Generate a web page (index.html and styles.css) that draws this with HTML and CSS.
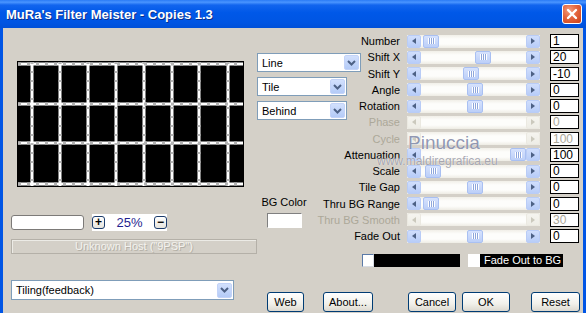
FILE: index.html
```html
<!DOCTYPE html>
<html lang="en">
<head>
  <meta charset="UTF-8" />
  <title>MuRa's Filter Meister - Copies 1.3</title>
  <link rel="stylesheet" href="styles.css">
</head>
<body>

<div class="window">
  <div class="titlebar">
    <span class="title">MuRa's Filter Meister - Copies 1.3</span>
    <span class="close">
      <svg width="12" height="12" viewBox="0 0 12 12"><path d="M2 2 L10 10 M10 2 L2 10" stroke="#fff" stroke-width="2.4" stroke-linecap="round"/></svg>
    </span>
  </div>

  <div class="frame">
    <!-- Preview side -->
    <div class="left">
      <div class="preview">
        <svg width="227" height="126" viewBox="0 0 227 126">
          <rect width="227" height="126" fill="#000"/>
          <g stroke="#fff" stroke-width="3">
            <path d="M1 3 H226 M1 43 H226 M1 82 H226 M1 123 H226"/>
            <path d="M15 1 V125 M43 1 V125 M71 1 V125 M99 1 V125 M127 1 V125 M155 1 V125 M182 1 V125 M211 1 V125"/>
          </g>
          <g stroke="#b4b4b4" stroke-width="3" stroke-dasharray="3 6">
            <path d="M1 3 H226 M1 43 H226 M1 82 H226 M1 123 H226"/>
          </g>
          <g stroke="#b4b4b4" stroke-width="3" stroke-dasharray="2 7">
            <path d="M15 1 V125 M43 1 V125 M71 1 V125 M99 1 V125 M127 1 V125 M155 1 V125 M182 1 V125 M211 1 V125"/>
          </g>
        </svg>
      </div>

      <div class="zoom-row">
        <div class="zoom-field"></div>
        <div class="zoom-box">
          <span class="zbtn">+</span>
          <span class="zval">25%</span>
          <span class="zbtn">&minus;</span>
        </div>
      </div>

      <div class="host">Unknown Host ("9PSP")</div>

      <div class="combo wide">
        <span>Tiling(feedback)</span>
        <i class="drop"><svg width="9" height="6" viewBox="0 0 9 6"><path d="M1 1 L4.5 4.5 L8 1" fill="none" stroke="#4d6185" stroke-width="2"/></svg></i>
      </div>
    </div>

    <!-- Controls side -->
    <div class="right">
      <div class="top">
        <div class="mid">
          <div class="combo line">
            <span>Line</span>
            <i class="drop"><svg width="9" height="6" viewBox="0 0 9 6"><path d="M1 1 L4.5 4.5 L8 1" fill="none" stroke="#4d6185" stroke-width="2"/></svg></i>
          </div>
          <div class="combo short">
            <span>Tile</span>
            <i class="drop"><svg width="9" height="6" viewBox="0 0 9 6"><path d="M1 1 L4.5 4.5 L8 1" fill="none" stroke="#4d6185" stroke-width="2"/></svg></i>
          </div>
          <div class="combo short">
            <span>Behind</span>
            <i class="drop"><svg width="9" height="6" viewBox="0 0 9 6"><path d="M1 1 L4.5 4.5 L8 1" fill="none" stroke="#4d6185" stroke-width="2"/></svg></i>
          </div>

          <div class="bg-color">
            <span>BG Color</span>
            <div class="swatch"></div>
          </div>
        </div>

        <div class="sliders">
          <div class="row">
            <label>Number</label>
            <div class="scroll"><i class="arr l"></i><span class="track"><b class="thumb" style="left:2px"></b></span><i class="arr r"></i></div>
            <div class="val">1</div>
          </div>
          <div class="row">
            <label>Shift X</label>
            <div class="scroll"><i class="arr l"></i><span class="track"><b class="thumb" style="left:54px"></b></span><i class="arr r"></i></div>
            <div class="val">20</div>
          </div>
          <div class="row">
            <label>Shift Y</label>
            <div class="scroll"><i class="arr l"></i><span class="track"><b class="thumb" style="left:42px"></b></span><i class="arr r"></i></div>
            <div class="val">-10</div>
          </div>
          <div class="row">
            <label>Angle</label>
            <div class="scroll"><i class="arr l"></i><span class="track"><b class="thumb" style="left:46px"></b></span><i class="arr r"></i></div>
            <div class="val">0</div>
          </div>
          <div class="row">
            <label>Rotation</label>
            <div class="scroll"><i class="arr l"></i><span class="track"><b class="thumb" style="left:46px"></b></span><i class="arr r"></i></div>
            <div class="val">0</div>
          </div>
          <div class="row off">
            <label>Phase</label>
            <div class="scroll"><i class="arr l"></i><span class="track"></span><i class="arr r"></i></div>
            <div class="val">0</div>
          </div>
          <div class="row off">
            <label>Cycle</label>
            <div class="scroll"><i class="arr l"></i><span class="track"></span><i class="arr r"></i></div>
            <div class="val">100</div>
          </div>
          <div class="row">
            <label>Attenuation</label>
            <div class="scroll"><i class="arr l"></i><span class="track"><b class="thumb" style="left:89px"></b></span><i class="arr r"></i></div>
            <div class="val">100</div>
          </div>
          <div class="row">
            <label>Scale</label>
            <div class="scroll"><i class="arr l"></i><span class="track"><b class="thumb" style="left:4px"></b></span><i class="arr r"></i></div>
            <div class="val">0</div>
          </div>
          <div class="row">
            <label>Tile Gap</label>
            <div class="scroll"><i class="arr l"></i><span class="track"><b class="thumb" style="left:46px"></b></span><i class="arr r"></i></div>
            <div class="val">0</div>
          </div>
          <div class="row">
            <label>Thru BG Range</label>
            <div class="scroll"><i class="arr l"></i><span class="track"><b class="thumb" style="left:2px"></b></span><i class="arr r"></i></div>
            <div class="val">0</div>
          </div>
          <div class="row off">
            <label>Thru BG Smooth</label>
            <div class="scroll"><i class="arr l"></i><span class="track"></span><i class="arr r"></i></div>
            <div class="val">30</div>
          </div>
          <div class="row">
            <label>Fade Out</label>
            <div class="scroll"><i class="arr l"></i><span class="track"><b class="thumb" style="left:46px"></b></span><i class="arr r"></i></div>
            <div class="val">0</div>
          </div>

          <div class="fade-bar">
            <div class="fade-color"><span class="chip"></span></div>
            <span class="check"></span>
            <span class="fade-label">Fade Out to BG</span>
          </div>
        </div>
      </div>

      <div class="buttons">
        <button class="btn web">Web</button>
        <button class="btn about">About...</button>
        <button class="btn cancel">Cancel</button>
        <button class="btn ok">OK</button>
        <button class="btn reset">Reset</button>
      </div>
    </div>
  </div>

  <!-- watermark stamped over the dialog -->
  <div class="mark-name">Pinuccia</div>
  <div class="mark-url">www.maldiregrafica.eu</div>
</div>

</body>
</html>
```

FILE: styles.css
```css
:root {
  --face: #d4d0c8;
  --xp-blue: #0055e5;
  --arrow: #4d6185;
  --off: #aca899;
}

body {
  margin: 0;
  background: var(--face);
  font-family: 'Liberation Sans', Arial, sans-serif;
  font-size: 11px;
  color: #000;
  overflow: hidden;
}

.window {
  position: relative;
  width: 586px;
  height: 313px;
  display: flex;
  flex-direction: column;
}

/* Title bar */
.titlebar {
  height: 28px;
  flex-shrink: 0;
  display: flex;
  align-items: center;
  justify-content: space-between;
  padding: 0 4px 0 6px;
  background: linear-gradient(#2a7bf5 0%, #4a95ff 8%, #1265ee 18%, #0058e8 45%, #0055e3 80%, #0050d8 100%);
}

.title {
  color: #fff;
  font-weight: bold;
  font-size: 13px;
  text-shadow: 1px 1px 0 #0b2f8a;
}

.close {
  width: 20px;
  height: 20px;
  box-sizing: border-box;
  border: 1px solid #fff;
  border-radius: 3px;
  background: radial-gradient(circle at 35% 30%, #f49c7c 0%, #e3653e 45%, #cc3f17 100%);
  display: flex;
  align-items: center;
  justify-content: center;
}

.frame {
  flex: 1;
  display: flex;
  border-left: 3px solid var(--xp-blue);
  border-right: 3px solid var(--xp-blue);
  padding-left: 8px;
  padding-right: 3px;
}

/* Left side */
.left {
  width: 246px;
  flex-shrink: 0;
}

.preview {
  margin: 33px 0 0 6px;
  width: 227px;
  height: 126px;
}

.preview svg {
  display: block;
}

.zoom-row {
  display: flex;
  align-items: center;
  margin-top: 27px;
  height: 17px;
}

.zoom-field {
  width: 73px;
  height: 15px;
  box-sizing: border-box;
  background: #fff;
  border: 1px solid #7c7a78;
  border-radius: 3px;
}

.zoom-box {
  margin-left: 8px;
  width: 75px;
  height: 17px;
  background: #fff;
  display: flex;
  align-items: center;
}

.zbtn {
  width: 13px;
  height: 13px;
  box-sizing: border-box;
  border: 1px solid #1c3c6c;
  border-radius: 3px;
  background: linear-gradient(#fff, #e6e4dc);
  font-size: 12px;
  font-weight: bold;
  line-height: 10px;
  text-align: center;
}

.zval {
  flex: 1;
  text-align: center;
  color: #1f1f8f;
  font-size: 13px;
}

.host {
  margin-top: 8px;
  height: 15px;
  box-sizing: border-box;
  border: 1px solid #b4b0a8;
  box-shadow: inset 1px 1px 0 #ecebe6;
  text-align: center;
  line-height: 13px;
  color: #f3f2ee;
  text-shadow: 1px 1px 0 #b3afa6;
}

/* Combo boxes */
.combo {
  display: flex;
  align-items: center;
  height: 19px;
  box-sizing: border-box;
  border: 1px solid #7f9db9;
  background: #fff;
  padding-left: 4px;
}

.combo span {
  flex: 1;
}

.combo.wide {
  margin-top: 26px;
  width: 223px;
  height: 20px;
}

.combo.line {
  width: 104px;
}

.combo.short {
  width: 90px;
  margin-top: 5px;
}

.drop {
  width: 15px;
  height: 15px;
  margin-right: 1px;
  box-sizing: border-box;
  border: 1px solid #c3d3f8;
  border-radius: 2px;
  background: linear-gradient(#d2e0fd, #b4cbf7);
  display: flex;
  align-items: center;
  justify-content: center;
}

/* Right side */
.right {
  flex: 1;
  display: flex;
  flex-direction: column;
}

.top {
  display: flex;
}

.mid {
  width: 103px;
  flex-shrink: 0;
  padding-top: 25px;
}

.bg-color {
  margin: 76px 0 0 1px;
  width: 52px;
  text-align: center;
  line-height: 13px;
  white-space: nowrap;
}

.swatch {
  margin: 4px auto 0;
  width: 35px;
  height: 15px;
  box-sizing: border-box;
  background: #fff;
  border: 1px solid;
  border-color: #808080 #fff #fff #808080;
}

.sliders {
  width: 220px;
  padding-top: 5px;
}

.row {
  height: 16.25px;
  display: flex;
  align-items: center;
}

.row label {
  width: 40px;
  flex-shrink: 0;
  display: flex;
  justify-content: flex-end;
  white-space: nowrap;
}

.scroll {
  margin-left: 7px;
  width: 133px;
  height: 13px;
  display: flex;
  background: linear-gradient(#f1efe8, #fdfdfb 30%, #fdfdfb 70%, #eeece4);
}

.track {
  flex: 1;
  position: relative;
}

.arr {
  width: 14px;
  height: 13px;
  box-sizing: border-box;
  border: 1px solid #b9ccf6;
  border-radius: 2px;
  background: linear-gradient(#d0defc, #b8cdf8);
  display: flex;
  align-items: center;
  justify-content: center;
}

.arr::after {
  content: "";
  border-top: 3.5px solid transparent;
  border-bottom: 3.5px solid transparent;
}

.arr.l::after {
  border-right: 4px solid var(--arrow);
}

.arr.r::after {
  border-left: 4px solid var(--arrow);
}

.thumb {
  position: absolute;
  top: 0;
  left: 0;
  width: 16px;
  height: 13px;
  box-sizing: border-box;
  border: 1px solid #a9c0f2;
  border-radius: 2px;
  background: linear-gradient(#d6e2fd, #bccff8);
  display: flex;
  align-items: center;
  justify-content: center;
}

.thumb::after {
  content: "";
  width: 7px;
  height: 6px;
  background: repeating-linear-gradient(90deg, #fff 0 1px, #8ea6dc 1px 2px);
}

.val {
  margin-left: 10px;
  width: 29px;
  height: 14px;
  box-sizing: border-box;
  background: #fff;
  border: 1px solid #000;
  padding-left: 2px;
  font-size: 12px;
  line-height: 12px;
}

.row.off label,
.row.off .val {
  color: var(--off);
}

.row.off .arr {
  border-color: #ebe9e1;
  background: linear-gradient(#f5f4ef, #eeede6);
}

.row.off .arr.l::after {
  border-right-color: #cbc9bd;
}

.row.off .arr.r::after {
  border-left-color: #cbc9bd;
}

/* Fade out strip */
.fade-bar {
  margin: 10px 0 0 2px;
  height: 13px;
  display: flex;
}

.fade-color {
  width: 98px;
  background: #000;
}

.chip {
  display: block;
  width: 12px;
  height: 13px;
  box-sizing: border-box;
  background: #fff;
  border: 1px solid;
  border-color: #5a7aa8 #d8dce4 #d8dce4 #5a7aa8;
}

.check {
  margin-left: 8px;
  width: 12px;
  height: 13px;
  background: #fff;
}

.fade-label {
  width: 83px;
  background: #000;
  color: #fff;
  padding-left: 4px;
  box-sizing: border-box;
  line-height: 13px;
  white-space: nowrap;
}

/* Dialog buttons */
.buttons {
  display: flex;
  margin-top: 25px;
}

.btn {
  height: 20px;
  padding: 0;
  border: 1px solid #003c74;
  border-radius: 3px;
  background: linear-gradient(#fff, #f1f0ea 60%, #dcd8cf);
  font-family: inherit;
  font-size: 11px;
  color: #000;
}

.web { margin-left: 10px; width: 37px; }
.about { margin-left: 19px; width: 50px; }
.cancel { margin-left: 35px; width: 48px; }
.ok { margin-left: 6px; width: 48px; }
.reset { margin-left: 21px; width: 49px; }

/* Watermark */
.mark-name {
  position: absolute;
  left: 408px;
  top: 133px;
  font-size: 19px;
  line-height: 19px;
  color: rgba(70, 82, 128, 0.6);
  text-shadow: 0 0 1px #fff;
}

.mark-url {
  position: absolute;
  left: 377px;
  top: 154px;
  font-size: 12px;
  line-height: 14px;
  color: rgba(95, 95, 115, 0.55);
  text-shadow: 0 0 1px #fff;
}
```
